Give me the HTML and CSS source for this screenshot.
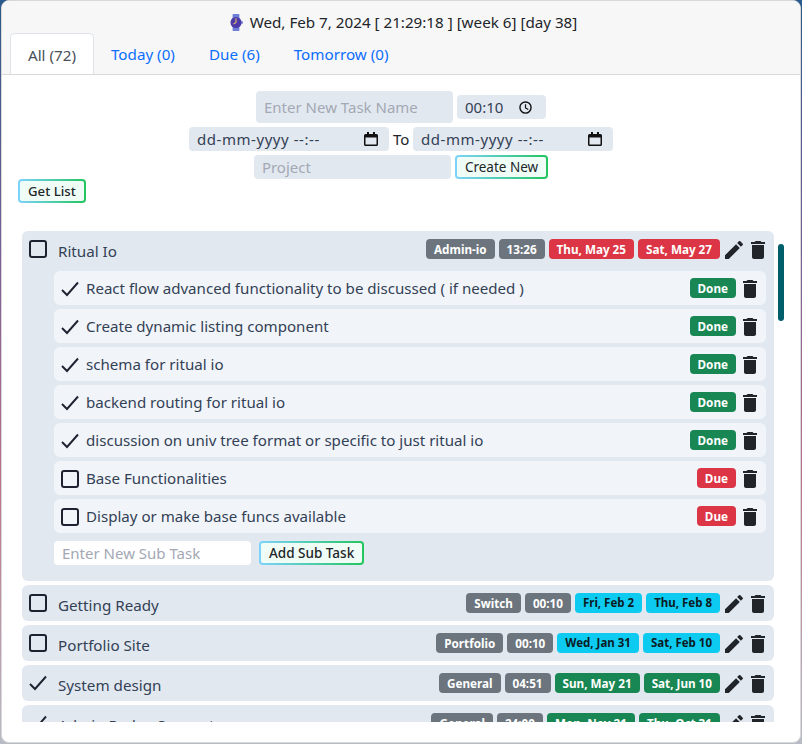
FILE: index.html
```html
<!DOCTYPE html>
<html>
<head>
  <title>Task List</title>
  <link rel="stylesheet" href="styles.css">
</head>
<body>
  <svg class="defs" width="0" height="0">
    <symbol id="pencil" viewBox="3 3 18 18"><path d="M3 17.25V21h3.75L17.81 9.94l-3.75-3.75L3 17.25zM20.71 7.04c.39-.39.39-1.02 0-1.41l-2.34-2.34c-.39-.39-1.02-.39-1.41 0l-1.83 1.83 3.75 3.75 1.83-1.83z"/></symbol>
    <symbol id="trash" viewBox="5 3 14 18"><path d="M6 19c0 1.1.9 2 2 2h8c1.1 0 2-.9 2-2V7H6v12zM19 4h-3.5l-1-1h-5l-1 1H5v2h14V4z"/></symbol>
    <symbol id="check" viewBox="0 0 18 18"><path d="M1 10l5 5L17 2.500" fill="none" stroke="currentColor" stroke-width="1.900"/></symbol>
    <symbol id="box" viewBox="0 0 18 18"><rect x="1" y="1" width="16" height="16" rx="2" fill="none" stroke="currentColor" stroke-width="2"/></symbol>
    <symbol id="calendar" viewBox="0 0 14 14"><path d="M3 0h2v2h4V0h2v2h1.5A1.5 1.5 0 0 1 14 3.5v9a1.5 1.5 0 0 1-1.5 1.5h-11A1.5 1.5 0 0 1 0 12.5v-9A1.5 1.5 0 0 1 1.500 2H3zM1.500 5.500v7h11v-7z"/></symbol>
    <symbol id="clock" viewBox="0 0 14 14"><circle cx="7" cy="7" r="6" fill="none" stroke="currentColor" stroke-width="1.500"/><path d="M7 3.500V7.500L10 9.200" fill="none" stroke="currentColor" stroke-width="1.300"/></symbol>
  </svg>

  <div class="card">
    <div class="card-header">
      <div class="today">
        <svg class="watch" viewBox="0 0 16 20">
          <rect x="4" y="0" width="8" height="20" rx="1" fill="#6f7fd8"/>
          <rect x="14" y="8.500" width="2" height="3" fill="#6f7fd8"/>
          <circle cx="8" cy="10" r="6.500" fill="#4b3aa8"/>
          <path d="M8 5v5l-3 2" fill="none" stroke="#f0c36a" stroke-width="1.200"/>
        </svg>
        Wed, Feb 7, 2024 [ 21:29:18 ] [week 6] [day 38]
      </div>
      <ul class="tabs">
        <li class="tab active">All (72)</li>
        <li class="tab">Today (0)</li>
        <li class="tab">Due (6)</li>
        <li class="tab">Tomorrow (0)</li>
      </ul>
    </div>

    <div class="card-body">
      <form class="new-task">
        <div class="form-row">
          <input class="field name" type="text" placeholder="Enter New Task Name">
          <div class="field time">00:10<svg class="picker"><use href="#clock"/></svg></div>
        </div>
        <div class="form-row">
          <div class="field date">dd-mm-yyyy --:--<svg class="picker"><use href="#calendar"/></svg></div>
          <span class="to">To</span>
          <div class="field date">dd-mm-yyyy --:--<svg class="picker"><use href="#calendar"/></svg></div>
        </div>
        <div class="form-row">
          <input class="field project" type="text" placeholder="Project">
          <button class="grad-btn" type="button">Create New</button>
        </div>
      </form>
      <button class="grad-btn get-list" type="button">Get List</button>

      <div class="list-wrap">
        <div class="task-list">

          <div class="task">
            <div class="task-head">
              <svg class="tick"><use href="#box"/></svg>
              <span class="task-name">Ritual Io</span>
              <span class="badge grey">Admin-io</span>
              <span class="badge grey">13:26</span>
              <span class="badge red">Thu, May 25</span>
              <span class="badge red">Sat, May 27</span>
              <svg class="pencil"><use href="#pencil"/></svg>
              <svg class="trash"><use href="#trash"/></svg>
            </div>
            <div class="sub">
              <svg class="sub-mark"><use href="#check"/></svg>
              <span class="sub-name">React flow advanced functionality to be discussed ( if needed )</span>
              <span class="badge green">Done</span>
              <svg class="trash"><use href="#trash"/></svg>
            </div>
            <div class="sub">
              <svg class="sub-mark"><use href="#check"/></svg>
              <span class="sub-name">Create dynamic listing component</span>
              <span class="badge green">Done</span>
              <svg class="trash"><use href="#trash"/></svg>
            </div>
            <div class="sub">
              <svg class="sub-mark"><use href="#check"/></svg>
              <span class="sub-name">schema for ritual io</span>
              <span class="badge green">Done</span>
              <svg class="trash"><use href="#trash"/></svg>
            </div>
            <div class="sub">
              <svg class="sub-mark"><use href="#check"/></svg>
              <span class="sub-name">backend routing for ritual io</span>
              <span class="badge green">Done</span>
              <svg class="trash"><use href="#trash"/></svg>
            </div>
            <div class="sub">
              <svg class="sub-mark"><use href="#check"/></svg>
              <span class="sub-name">discussion on univ tree format or specific to just ritual io</span>
              <span class="badge green">Done</span>
              <svg class="trash"><use href="#trash"/></svg>
            </div>
            <div class="sub">
              <svg class="sub-mark"><use href="#box"/></svg>
              <span class="sub-name">Base Functionalities</span>
              <span class="badge red">Due</span>
              <svg class="trash"><use href="#trash"/></svg>
            </div>
            <div class="sub">
              <svg class="sub-mark"><use href="#box"/></svg>
              <span class="sub-name">Display or make base funcs available</span>
              <span class="badge red">Due</span>
              <svg class="trash"><use href="#trash"/></svg>
            </div>
            <div class="add-sub">
              <input class="field sub-input" type="text" placeholder="Enter New Sub Task">
              <button class="grad-btn add-btn" type="button">Add Sub Task</button>
            </div>
          </div>

          <div class="task">
            <div class="task-head">
              <svg class="tick"><use href="#box"/></svg>
              <span class="task-name">Getting Ready</span>
              <span class="badge grey">Switch</span>
              <span class="badge grey">00:10</span>
              <span class="badge cyan">Fri, Feb 2</span>
              <span class="badge cyan">Thu, Feb 8</span>
              <svg class="pencil"><use href="#pencil"/></svg>
              <svg class="trash"><use href="#trash"/></svg>
            </div>
          </div>

          <div class="task">
            <div class="task-head">
              <svg class="tick"><use href="#box"/></svg>
              <span class="task-name">Portfolio Site</span>
              <span class="badge grey">Portfolio</span>
              <span class="badge grey">00:10</span>
              <span class="badge cyan">Wed, Jan 31</span>
              <span class="badge cyan">Sat, Feb 10</span>
              <svg class="pencil"><use href="#pencil"/></svg>
              <svg class="trash"><use href="#trash"/></svg>
            </div>
          </div>

          <div class="task">
            <div class="task-head">
              <svg class="tick"><use href="#check"/></svg>
              <span class="task-name">System design</span>
              <span class="badge grey">General</span>
              <span class="badge grey">04:51</span>
              <span class="badge green">Sun, May 21</span>
              <span class="badge green">Sat, Jun 10</span>
              <svg class="pencil"><use href="#pencil"/></svg>
              <svg class="trash"><use href="#trash"/></svg>
            </div>
          </div>

          <div class="task">
            <div class="task-head">
              <svg class="tick"><use href="#check"/></svg>
              <span class="task-name">Admin Redux Support</span>
              <span class="badge grey">General</span>
              <span class="badge grey">24:00</span>
              <span class="badge green">Mon, Nov 21</span>
              <span class="badge green">Thu, Oct 31</span>
              <svg class="pencil"><use href="#pencil"/></svg>
              <svg class="trash"><use href="#trash"/></svg>
            </div>
          </div>

        </div>
        <div class="scroll-thumb"></div>
      </div>
    </div>
  </div>
</body>
</html>
```

FILE: styles.css
```css
* {
  box-sizing: border-box;
}

html, body {
  height: 100%;
}

body {
  margin: 0;
  background: linear-gradient(180deg, #2b5a8c 0%, #7a5f96 35%, #c0708c 65%, #b8bcc4 100%);
  font-family: "Noto Sans", Arial, sans-serif;
  color: #212529;
  overflow: hidden;
}

.defs {
  position: absolute;
}

.card {
  height: 743px;
  margin-left: 1px;
  margin-right: 1px;
  background: #fff;
  border: 1px solid #d8d8d8;
  border-radius: 8px;
  overflow: hidden;
}

.card-header {
  height: 74px;
  background: #f7f7f7;
  border-bottom: 1px solid #d9d9d9;
  display: flex;
  flex-direction: column;
}

.today {
  height: 32px;
  padding: 9px 0 0 4px;
  font-size: 15.2px;
  line-height: 24px;
  text-align: center;
}

.watch {
  width: 14px;
  height: 17px;
  vertical-align: -3px;
  margin-right: 3px;
}

.tabs {
  display: flex;
  margin: 0;
  padding: 0 0 0 8px;
  list-style: none;
}

.tab {
  height: 41px;
  padding: 0 17px;
  font-size: 15.2px;
  line-height: 42px;
  color: #0d6efd;
}

.tab.active {
  background: #fff;
  color: #495057;
  border: 1px solid #dee2e6;
  border-bottom: 0;
  border-radius: 5px 5px 0 0;
}

.card-body {
  padding-top: 16px;
}

.new-task {
  display: flex;
  flex-direction: column;
  align-items: center;
  gap: 4px;
}

.form-row {
  display: flex;
  align-items: center;
  gap: 4px;
}

.field {
  height: 24px;
  border: 0;
  outline: 0;
  border-radius: 4px;
  background: #e2e8f0;
  padding: 0 8px;
  font-family: inherit;
  font-size: 15px;
  color: #334155;
  display: flex;
  align-items: center;
  justify-content: space-between;
}

.field::placeholder {
  color: #a3a8b4;
}

.name {
  width: 197px;
  height: 32px;
}

.time {
  width: 89px;
}

.time .picker {
  width: 13px;
  height: 13px;
  margin-right: 6px;
}

.date {
  width: 200px;
  letter-spacing: 0.55px;
}

.project {
  width: 197px;
}

.to {
  font-size: 15px;
  width: 16px;
}

.picker {
  width: 14px;
  height: 14px;
  margin-right: 3px;
  color: #111;
  fill: #111;
}

.grad-btn {
  height: 24px;
  padding: 0 8px;
  font-family: inherit;
  font-size: 13.5px;
  color: #212529;
  background: linear-gradient(#f0fdf6, #f0fdf6) padding-box, linear-gradient(90deg, #7dd3fc, #22c55e) border-box;
  border: 2px solid transparent;
  border-radius: 4px;
}

.get-list {
  display: block;
  margin-left: 16px;
  font-size: 13.2px;
  font-weight: 500;
}

.list-wrap {
  position: relative;
  height: 491px;
  margin: 28px 0 0 20px;
  overflow: hidden;
}

.task-list {
  display: flex;
  flex-direction: column;
  gap: 4px;
  width: 752px;
}

.task {
  background: #e2e8f0;
  border-radius: 6px;
}

.task-head {
  height: 36px;
  padding: 0 8px 0 7px;
  display: flex;
  align-items: center;
  gap: 4px;
}

.task-head + .sub {
  margin-top: 4px;
}

.task-name {
  flex: 1;
  font-size: 15.2px;
  color: #334155;
  padding: 4px 0 0 7px;
}

.tick {
  width: 18px;
  height: 18px;
  color: #1e2130;
}

.badge {
  height: 20px;
  padding: 0 8px;
  border-radius: 4px;
  font-size: 11.7px;
  font-weight: 700;
  line-height: 20px;
  color: #fff;
  white-space: nowrap;
}

.grey {
  background: #6c757d;
}

.red {
  background: #dc3545;
}

.green {
  background: #198754;
}

.cyan {
  background: #0dcaf0;
  color: #0b1a24;
  font-size: 11.5px;
}

.pencil {
  width: 18px;
  height: 18px;
  margin: 2px 1px 0;
  fill: #212529;
}

.trash {
  width: 14px;
  height: 18px;
  margin: 2px 1px 0 3px;
  fill: #212529;
}

.sub {
  height: 34px;
  margin: 0 8px 4px 32px;
  padding: 0 8px 0 7px;
  background: #f1f5f9;
  border-radius: 6px;
  display: flex;
  align-items: center;
  gap: 4px;
}

.sub-name {
  flex: 1;
  font-size: 15.1px;
  color: #334155;
}

.sub-mark {
  width: 18px;
  height: 18px;
  margin: 1px 3px 0 0;
  color: #1e2130;
}

.add-sub {
  display: flex;
  gap: 8px;
  margin: 8px 0 0 32px;
  padding-bottom: 16px;
}

.sub-input {
  width: 197px;
  background: #fff;
}

.add-btn {
  font-weight: 500;
}

.scroll-thumb {
  position: absolute;
  left: 756px;
  top: 13px;
  width: 6px;
  height: 77px;
  background: #005f6b;
  border-radius: 3px;
}
```
